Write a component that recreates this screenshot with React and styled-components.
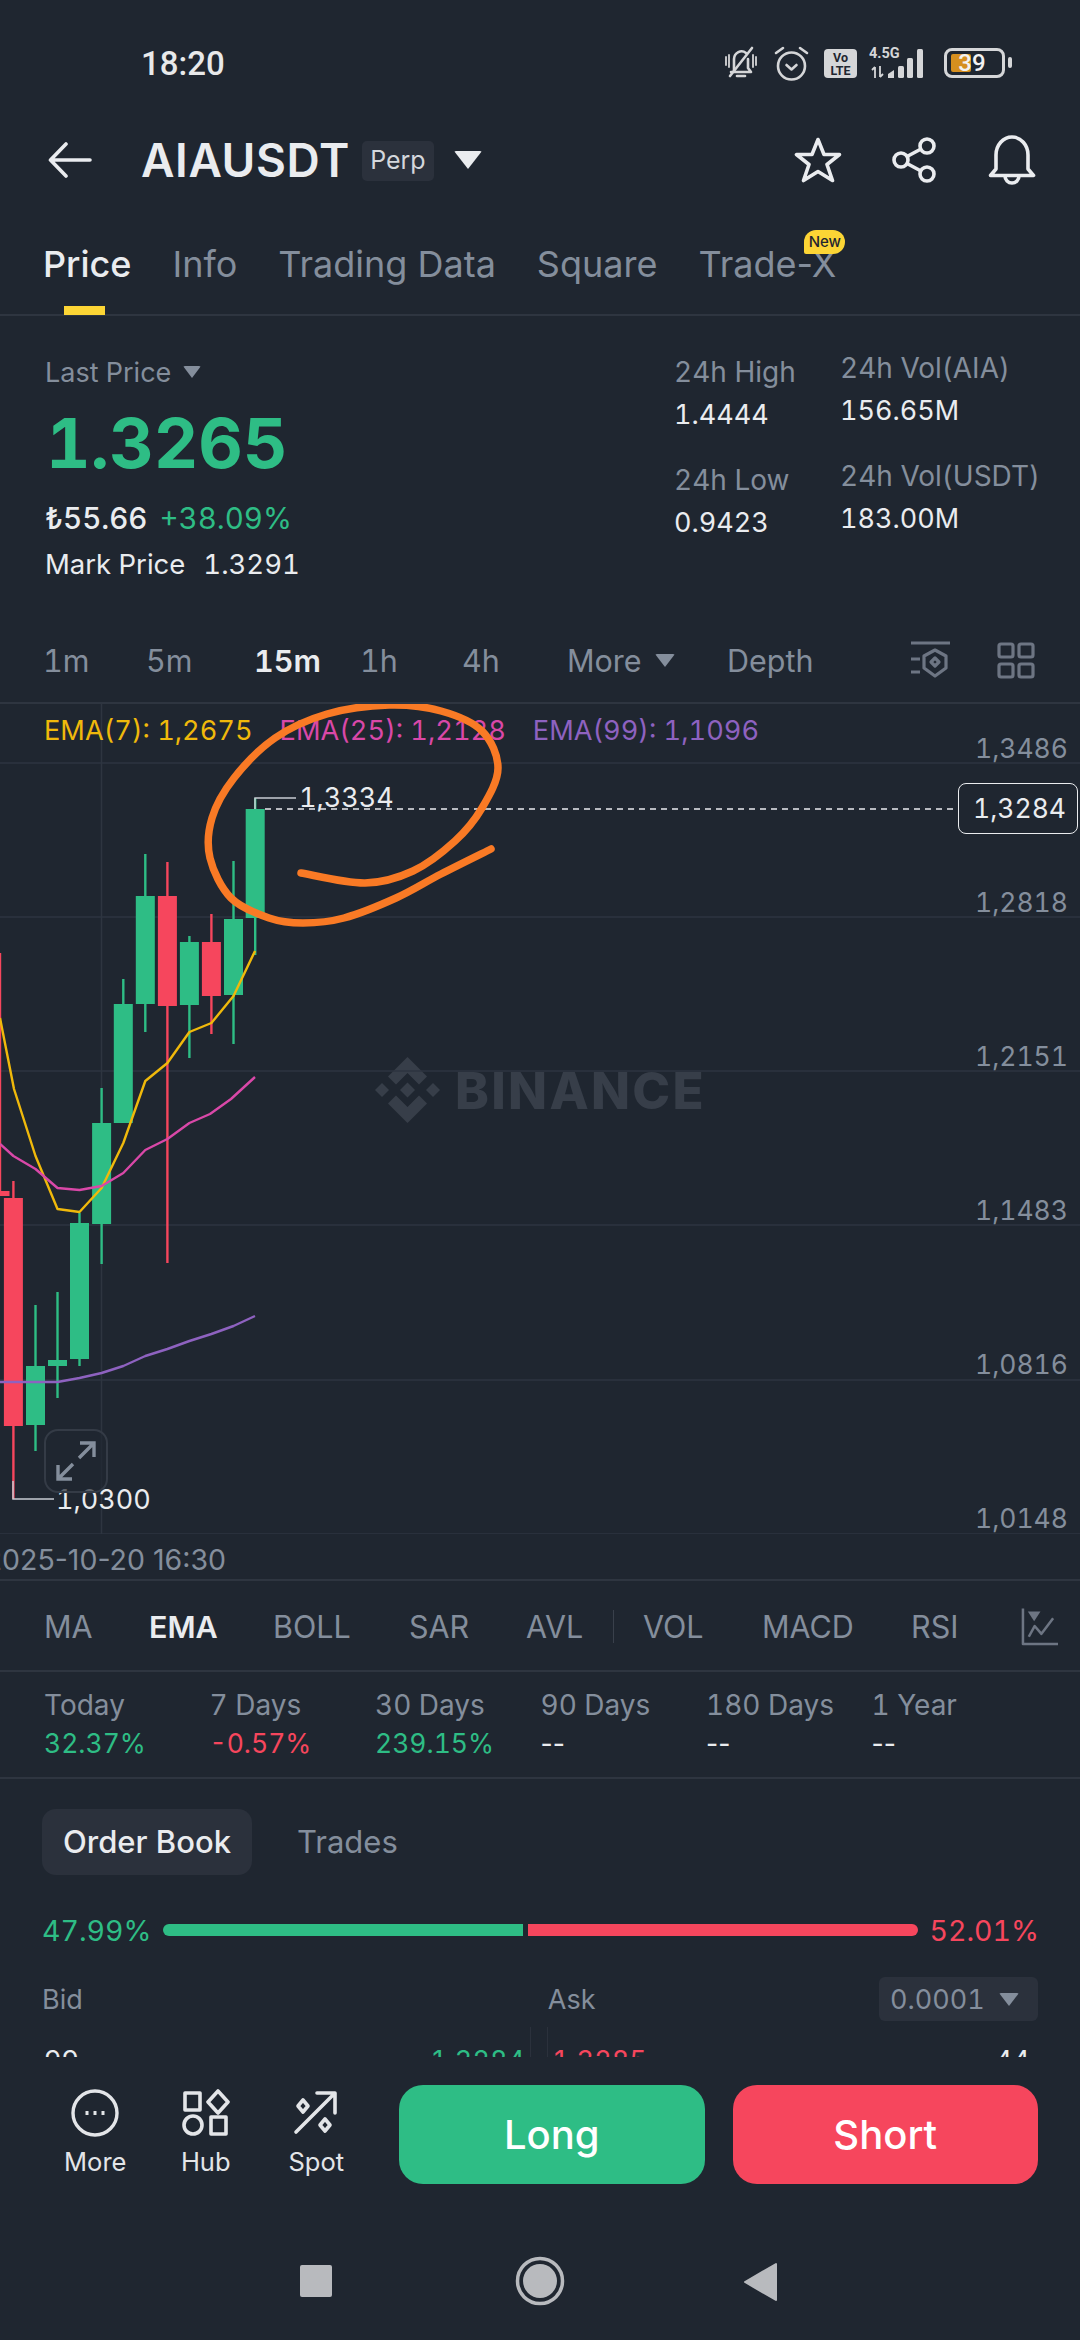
import React from 'react'
import styled, { createGlobalStyle } from 'styled-components'

const GlobalStyle = createGlobalStyle`
 html, body { margin: 0; padding: 0; background: #1f2630; }
 * { box-sizing: border-box; }
`

const green = '#2ebd85'
const red = '#f6465d'
const gray = '#848e9c'
const white = '#eaecef'
const line = '#2e3540'

const Page = styled.div`
 width: 1080px;
 height: 2340px;
 overflow: hidden;
 background: #1f2630;
 color: ${white};
 font-family: Inter, Lato, sans-serif;
 font-variant-numeric: tabular-nums;
 display: flex;
 flex-direction: column;
`

/* status bar */
const StatusBar = styled.div`
 height: 126px;
 flex: none;
 position: relative;
 display: flex;
 align-items: center;
 padding-left: 141px;
 font-family: Roboto, sans-serif;
 font-size: 33px;
 font-weight: 500;
 color: #e8e9ea;
`
const StatusIcons = styled.div`
 margin-left: auto;
 margin-right: 75px;
 display: flex;
 align-items: center;
 height: 40px;
`
const VoLte = styled.div`
 width: 33px;
 height: 29px;
 margin: 0 12px 0 14px;
 border-radius: 4px;
 background: #d5d6d8;
 color: #1f2630;
 font-size: 12.5px;
 font-weight: 700;
 line-height: 13px;
 text-align: center;
 padding-top: 2px;
`
const Network = styled.div`
 width: 60px;
 height: 32px;
 position: relative;
`
const NetText = styled.span`
 position: absolute;
 left: 0;
 top: 0;
 font-size: 14.5px;
 line-height: 14px;
 font-weight: 700;
 color: #d5d6d8;
`
const Battery = styled.div`
 width: 61px;
 height: 30px;
 margin-left: 15px;
 border: 3px solid #d5d6d8;
 border-radius: 8px;
 position: relative;
 display: flex;
 align-items: center;
 justify-content: center;
 padding-right: 5px;
 font-size: 24px;
 font-weight: 500;
 color: #f2f2f2;
 &::before {
  content: '';
  position: absolute;
  left: 4px;
  top: 3px;
  bottom: 3px;
  width: 20px;
  background: #d68f1f;
  border-radius: 2px;
  z-index: 0;
 }
 &::after {
  content: '';
  position: absolute;
  right: -10px;
  top: 6px;
  width: 4px;
  height: 11px;
  background: #d5d6d8;
  border-radius: 2px;
 }
`
const BatteryText = styled.span`
 position: relative;
 z-index: 1;
`
const IconGap = styled.span`
 width: ${p => p.$w}px;
 flex: none;
`

/* header */
const Header = styled.div`
 height: 68px;
 flex: none;
 display: flex;
 align-items: center;
 padding: 0 44px 0 48px;
`
const Title = styled.div`
 margin-left: 49px;
 font-size: 46px;
 font-weight: 600;
 letter-spacing: 0.6px;
 color: ${white};
`
const PerpBadge = styled.div`
 margin-left: 12px;
 width: 72px;
 height: 40px;
 margin-top: 2px;
 border-radius: 5px;
 background: #2b313c;
 font-size: 25px;
 line-height: 38px;
 text-align: center;
 color: #d4d7dc;
`
const Triangle = styled.span`
 display: inline-block;
 flex: none;
 width: 0;
 height: 0;
 border-left: ${p => p.$w / 2}px solid transparent;
 border-right: ${p => p.$w / 2}px solid transparent;
 border-top: ${p => p.$h}px solid ${p => p.$color || gray};
 border-radius: 2px;
`
const HeaderActions = styled.div`
 margin-left: auto;
 display: flex;
 align-items: center;
 gap: 50px;
`

/* tabs */
const Tabs = styled.div`
 height: 122px;
 flex: none;
 display: flex;
 gap: 41px;
 padding: 48px 0 0 43px;
 border-bottom: 2px solid ${line};
`
const Tab = styled.div`
 position: relative;
 height: 44px;
 line-height: 44px;
 font-size: 36px;
 font-variant-numeric: normal;
 font-weight: ${p => (p.$active ? 500 : 400)};
 color: ${p => (p.$active ? white : gray)};
`
const TabMark = styled.div`
 position: absolute;
 left: 21px;
 top: 64px;
 width: 41px;
 height: 9px;
 background: #fcd535;
`
const NewBadge = styled.div`
 position: absolute;
 right: -9px;
 top: -12px;
 width: 41px;
 height: 24px;
 border-radius: 12px 12px 12px 2px;
 background: #fcd535;
 color: #1f2630;
 font-size: 15px;
 line-height: 24px;
 font-weight: 500;
 text-align: center;
`

/* price summary */
const Summary = styled.div`
 height: 312px;
 flex: none;
 display: flex;
 padding-left: 45px;
`
const SummaryMain = styled.div`
 width: 629px;
 padding-top: 38px;
`
const LastLabel = styled.div`
 display: flex;
 align-items: center;
 gap: 12px;
 height: 36px;
 font-size: 27px;
 color: ${gray};
`
const BigPrice = styled.div`
 margin: 13px 0 0 1px;
 height: 80px;
 line-height: 80px;
 font-size: 69px;
 font-weight: 700;
 color: ${green};
`
const ChangeRow = styled.div`
 margin-top: 17px;
 height: 36px;
 line-height: 36px;
 font-size: 29.5px;
 display: flex;
 gap: 12px;
 font-weight: 500;
`
const Up = styled.span`
 color: ${green};
 font-weight: 400;
`
const MarkRow = styled.div`
 margin-top: 10px;
 height: 36px;
 line-height: 36px;
 font-size: 27.5px;
 display: flex;
 gap: 18px;
`
const StatCol = styled.div`
 width: ${p => p.$w}px;
 padding-top: ${p => p.$top}px;
 display: flex;
 flex-direction: column;
 gap: 29px;
`
const Stat = styled.div`
 display: flex;
 flex-direction: column;
 gap: 7px;
`
const StatLabel = styled.div`
 height: 36px;
 line-height: 36px;
 font-size: 28px;
 color: ${gray};
 white-space: nowrap;
`
const StatValue = styled.div`
 height: 36px;
 line-height: 36px;
 font-size: 27px;
`

/* interval row */
const Intervals = styled.div`
 height: 76px;
 flex: none;
 display: flex;
 align-items: center;
 padding: 0 45px 10px 43px;
 border-bottom: 2px solid ${line};
`
const Interval = styled.div`
 width: ${p => p.$w}px;
 flex: none;
 display: flex;
 align-items: center;
 gap: 13px;
 font-size: 30.5px;
 font-weight: ${p => (p.$active ? 600 : 400)};
 color: ${p => (p.$active ? white : gray)};
`
const IntervalIcons = styled.div`
 margin-left: auto;
 display: flex;
 align-items: center;
 gap: 46px;
`

/* chart */
const Chart = styled.div`
 position: relative;
 height: 830px;
 flex: none;
 overflow: hidden;
`
const ChartDrawing = styled.svg`
 position: absolute;
 left: 0;
 top: 0;
 width: 1080px;
 height: 830px;
`
const EmaRow = styled.div`
 position: relative;
 height: 52px;
 display: flex;
 align-items: center;
 gap: 27px;
 padding-left: 44px;
 font-size: 27.2px;
 white-space: nowrap;
`
const Ema = styled.span`
 color: ${p => p.$color};
`
const Watermark = styled.div`
 position: absolute;
 left: 375px;
 top: 353px;
 display: flex;
 align-items: center;
 gap: 15px;
 font-size: 51px;
 font-weight: 800;
 letter-spacing: 2.3px;
 color: #373e49;
`
const PriceAxis = styled.div`
 position: absolute;
 right: 12px;
 top: 27px;
 display: flex;
 flex-direction: column;
 gap: 120px;
 align-items: flex-end;
`
const Tick = styled.div`
 height: 34px;
 line-height: 34px;
 font-size: 26.5px;
 color: ${gray};
`
const PriceTag = styled.div`
 position: absolute;
 left: 958px;
 top: 79px;
 width: 120px;
 height: 51px;
 padding-left: 3px;
 border: 1.5px solid ${white};
 border-radius: 8px;
 background: #1f2630;
 font-size: 26.5px;
 line-height: 48px;
 text-align: center;
`
const Extreme = styled.div`
 position: absolute;
 left: ${p => p.$left}px;
 top: ${p => p.$top}px;
 height: 34px;
 line-height: 34px;
 font-size: 27px;
 color: ${white};
`
const ExpandButton = styled.div`
 position: absolute;
 left: 44px;
 top: 725px;
 width: 64px;
 height: 64px;
 border: 2px solid #343b46;
 border-radius: 14px;
 background: rgba(31, 38, 48, 0.7);
 display: flex;
 align-items: center;
 justify-content: center;
`
const DateRow = styled.div`
 height: 45px;
 flex: none;
 display: flex;
 align-items: center;
 justify-content: flex-end;
 width: 226px;
 padding-top: 5px;
 font-size: 28.5px;
 font-variant-numeric: normal;
 color: ${gray};
 white-space: nowrap;
`
const Rule = styled.div`
 height: 2px;
 flex: none;
 background: ${line};
`

/* indicators */
const Indicators = styled.div`
 height: 91px;
 flex: none;
 display: flex;
 align-items: center;
 padding: 2px 22px 0 44px;
 font-size: 30.5px;
 border-bottom: 2px solid ${line};
`
const Indicator = styled.div`
 width: ${p => p.$w}px;
 flex: none;
 font-weight: ${p => (p.$active ? 600 : 400)};
 color: ${p => (p.$active ? white : gray)};
`
const Divider = styled.div`
 width: 1px;
 height: 33px;
 background: #39404b;
 flex: none;
 margin: 0 29px 0 0;
`

/* period returns */
const Periods = styled.div`
 height: 107px;
 flex: none;
 display: grid;
 grid-template-columns: repeat(6, 165.5px);
 padding: 16px 0 0 44px;
 border-bottom: 2px solid ${line};
`
const Period = styled.div`
 display: flex;
 flex-direction: column;
 gap: 4px;
 line-height: 34px;
`
const PeriodLabel = styled.div`
 color: ${gray};
 font-size: 28px;
`
const PeriodValue = styled.div`
 font-size: 26.5px;
 font-variant-numeric: ${p => (p.$empty ? 'normal' : 'tabular-nums')};
 color: ${p => p.$color};
`

/* order book */
const BookTabs = styled.div`
 flex: none;
 display: flex;
 align-items: center;
 gap: 45px;
 margin: 30px 0 0 42px;
`
const BookTab = styled.div`
 height: 66px;
 line-height: 66px;
 font-size: 31px;
 font-weight: ${p => (p.$active ? 500 : 400)};
 color: ${p => (p.$active ? white : gray)};
 padding: 0 ${p => (p.$active ? 21 : 0)}px;
 border-radius: 14px;
 background: ${p => (p.$active ? '#2b313c' : 'transparent')};
`
const Ratio = styled.div`
 margin-top: 37px;
 height: 36px;
 flex: none;
 display: flex;
 align-items: center;
 padding: 0 41px 0 42px;
 font-size: 28.5px;
`
const RatioBar = styled.div`
 margin: 0 11px;
 flex: 1;
 height: 12px;
 display: flex;
 gap: 5px;
`
const RatioPart = styled.div`
 height: 12px;
 background: ${p => p.$color};
 border-radius: ${p => p.$radius};
`
const Down = styled.span`
 color: ${red};
`
const BookHead = styled.div`
 margin-top: 29px;
 height: 44px;
 flex: none;
 display: flex;
 align-items: center;
 padding: 0 42px;
 font-size: 27px;
 color: ${gray};
`
const AskHead = styled.div`
 margin-left: 465px;
`
const Precision = styled.div`
 margin-left: auto;
 width: 159px;
 height: 44px;
 display: flex;
 align-items: center;
 gap: 14px;
 padding-left: 11px;
 border-radius: 6px;
 background: #2b313c;
`
const BookClip = styled.div`
 margin-top: 6px;
 height: 30px;
 flex: none;
 overflow: hidden;
 display: grid;
 grid-template-columns: 481px 27px 1fr;
 padding: 17px 50px 0 44px;
 font-size: 27px;
 line-height: 34px;
 position: relative;
`
const BookSide = styled.div`
 display: flex;
 justify-content: space-between;
 color: ${p => p.$color};
`
const BookQty = styled.span`
 color: ${white};
`
const BookGap = styled.div`
 margin: -17px 4px 0 5px;
 border-left: 1px solid #2b313c;
 border-right: 1px solid #2b313c;
 height: 60px;
`

/* actions */
const ActionBar = styled.div`
 margin-top: 28px;
 height: 99px;
 flex: none;
 display: flex;
 align-items: stretch;
 padding: 0 42px 0 40px;
`
const NavItems = styled.div`
 width: 331px;
 flex: none;
 display: flex;
`
const NavItem = styled.div`
 width: 110.5px;
 flex: none;
 display: flex;
 flex-direction: column;
 align-items: center;
 font-size: 25.5px;
 line-height: 32px;
 color: #e3e5e8;
 gap: 9px;
 padding-top: 4px;
`
const TradeButton = styled.div`
 width: 306px;
 margin-left: ${p => p.$gap}px;
 border-radius: 24px;
 background: ${p => p.$color};
 color: #fff;
 font-size: 40px;
 font-weight: 500;
 display: flex;
 align-items: center;
 justify-content: center;
`

/* android nav */
const SystemNav = styled.div`
 flex: 1;
 position: relative;
 display: flex;
 align-items: center;
 justify-content: center;
 padding-top: 37px;
`

const candles = [
 { x: 0, top: 952, low: 1195, o: 1190, c: 1195, col: red },
 { x: 13.4, top: 1180, low: 1498, o: 1197, c: 1425, col: red },
 { x: 35.5, top: 1304, low: 1450, o: 1365, c: 1424, col: green },
 { x: 57.5, top: 1291, low: 1397, o: 1359, c: 1365, col: green },
 { x: 79.5, top: 1212, low: 1365, o: 1222, c: 1358, col: green },
 { x: 101.6, top: 1087, low: 1263, o: 1122, c: 1223, col: green },
 { x: 123.3, top: 978, low: 1122, o: 1003, c: 1122, col: green },
 { x: 145.3, top: 853, low: 1031, o: 895, c: 1003, col: green },
 { x: 167.4, top: 861, low: 1262, o: 895, c: 1005, col: red },
 { x: 189.4, top: 935, low: 1057, o: 941, c: 1004, col: green },
 { x: 211.4, top: 913, low: 1033, o: 941, c: 995, col: red },
 { x: 233.5, top: 860, low: 1043, o: 918, c: 994, col: green },
 { x: 255.2, top: 797, low: 954, o: 808, c: 917, col: green },
]

const ema7 = '0,1017 14,1088 35.5,1155 57.5,1208 79.5,1211 101.6,1187 123.3,1142 145.3,1080 167.4,1062 189.4,1031 211.4,1022 233.5,995 255,950'
const ema25 = '0,1143 13.4,1155 35.5,1168 57.5,1187 79.5,1189 101.6,1185 123.3,1172 145.3,1149 167.4,1138 189.4,1122 210,1113 231,1098 255,1076'
const ema99 = '0,1381 35.5,1381 57.5,1381 79.5,1377 101.6,1372 123.3,1365 145.3,1355 167.4,1348 189.4,1340 211.4,1333 233.5,1325 255,1315'

const orangePts = [
 [301, 872], [365, 882], [413, 870], [455, 840], [482, 807], [498, 767], [482, 730], [441, 710],
 [389, 704], [327, 713], [275, 737], [234, 777], [212, 817], [210, 857], [231, 897], [269, 917],
 [303, 922], [344, 917], [396, 897], [441, 873], [491, 848],
]

// catmull-rom through the hand drawn points
const smooth = pts => {
 let d = `M${pts[0][0]} ${pts[0][1]}`
 for (let i = 0; i < pts.length - 1; i++) {
  const p0 = pts[i - 1] || pts[i]
  const p1 = pts[i]
  const p2 = pts[i + 1]
  const p3 = pts[i + 2] || p2
  d += ` C${p1[0] + (p2[0] - p0[0]) / 6} ${p1[1] + (p2[1] - p0[1]) / 6} ${p2[0] - (p3[0] - p1[0]) / 6} ${p2[1] - (p3[1] - p1[1]) / 6} ${p2[0]} ${p2[1]}`
 }
 return d
}

const BellOff = () => (
 <svg width="36" height="34" viewBox="0 0 36 34" fill="none" stroke="#d5d6d8" strokeWidth="2.6" strokeLinecap="round" strokeLinejoin="round">
  <path d="M11 25 V13 a7.5 8 0 0 1 12 -6 M25 13 V22 l3 4 H8" />
  <path d="M14 30 h8" />
  <path d="M29 2 L7 30" />
  <path d="M3 11 v8 M6 9 v12 M33 11 v8 M30 9 v12" strokeWidth="1.8" />
 </svg>
)
const Alarm = () => (
 <svg width="37" height="37" viewBox="0 0 37 37" fill="none" stroke="#d5d6d8" strokeWidth="2.6" strokeLinecap="round" strokeLinejoin="round">
  <circle cx="18.5" cy="21" r="13.5" />
  <path d="M13.5 20 l5 4.5 l5 -4.5" />
  <path d="M3 8 L10 3 M34 8 L27 3" />
 </svg>
)
const Signal = () => (
 <svg width="60" height="32" viewBox="0 0 60 32" fill="#d5d6d8">
  <path d="M6 31 V20 M3 23 L6 20 M11 19 V30 M11 30 L14 27" stroke="#d5d6d8" strokeWidth="1.8" fill="none" />
  <path d="M19 31 v-4 l6 -4 v8 z" />
  <rect x="29" y="19" width="6" height="12" rx="1.5" />
  <rect x="38" y="11" width="6" height="20" rx="1.5" />
  <rect x="48" y="2" width="6" height="29" rx="1.5" />
 </svg>
)
const BackArrow = () => (
 <svg width="44" height="36" viewBox="0 0 44 36" fill="none" stroke={white} strokeWidth="3.6" strokeLinecap="round" strokeLinejoin="round">
  <path d="M42 18 H3 M18 2 L2.5 18 L18 34" />
 </svg>
)
const Star = () => (
 <svg width="48" height="46" viewBox="0 0 48 46" fill="none" stroke={white} strokeWidth="3.6" strokeLinejoin="round">
  <path d="M24 2.5 L30 17.5 H45.5 L33 27.5 L38.5 43.5 L24 34.5 L9.5 43.5 L15 27.5 L2.5 17.5 H18 Z" />
 </svg>
)
const Share = () => (
 <svg width="46" height="46" viewBox="0 0 46 46" fill="none" stroke={white} strokeWidth="3.6">
  <circle cx="35" cy="9" r="7" />
  <circle cx="35" cy="37" r="7" />
  <circle cx="9" cy="23" r="7" />
  <path d="M15 19.5 L29 12 M15 26.5 L29 34" />
 </svg>
)
const Bell = () => (
 <svg width="48" height="50" viewBox="0 0 48 50" fill="none" stroke={white} strokeWidth="3.6" strokeLinejoin="round">
  <path d="M8 34 V20 a16 18 0 0 1 32 0 V34 l5.5 6.5 H2.5 Z" />
  <path d="M17 41 a7 7 0 0 0 14 0" />
 </svg>
)
const ChartSettings = () => (
 <svg width="42" height="38" viewBox="0 0 42 38" fill="none" stroke="#6d7583" strokeWidth="3.2" strokeLinejoin="round">
  <path d="M2 2 H41 M2 18 H11 M2 31 H11" />
  <path d="M26 9 L37 15 V27 L26 35 L15 27 V15 Z" />
  <path d="M26 17 L30 21 L26 25 L22 21 Z" />
 </svg>
)
const LayoutGrid = () => (
 <svg width="38" height="37" viewBox="0 0 38 37" fill="none" stroke="#6d7583" strokeWidth="3.2">
  <rect x="2" y="2" width="14" height="13" rx="2" />
  <rect x="22" y="2" width="14" height="13" rx="2" />
  <rect x="2" y="22" width="14" height="13" rx="2" />
  <rect x="22" y="22" width="14" height="13" rx="2" />
 </svg>
)
const IndicatorIcon = () => (
 <svg width="38" height="38" viewBox="0 0 38 38" fill="none" stroke="#6d7583" strokeWidth="2.6" strokeLinejoin="round">
  <path d="M2 0 V36.5 H38" />
  <path d="M8 29 L14 18 L21 26 L33 10" />
  <path d="M7 3 H20 L13.5 13 Z" fill="#6d7583" stroke="none" />
 </svg>
)
const MoreIcon = () => (
 <svg width="48" height="48" viewBox="0 0 48 48" fill="none" stroke="#e3e5e8" strokeWidth="3.4">
  <circle cx="24" cy="24" r="22" />
  <path d="M14.5 24 h3 M22.5 24 h3 M30.5 24 h3" strokeWidth="4" />
 </svg>
)
const HubIcon = () => (
 <svg width="48" height="48" viewBox="0 0 48 48" fill="none" stroke="#e3e5e8" strokeWidth="3.6" strokeLinejoin="round">
  <rect x="3" y="4" width="15" height="17" />
  <path d="M36 2 L46 13 L36 24 L26 13 Z" />
  <circle cx="11" cy="36" r="9" />
  <rect x="29" y="28" width="15" height="17" />
 </svg>
)
const SpotIcon = () => (
 <svg width="46" height="48" viewBox="0 0 46 48" fill="none" stroke="#e3e5e8" strokeWidth="3.6" strokeLinejoin="round" strokeLinecap="round">
  <path d="M3 43 L41 5 M24 4 H42 V24" />
  <path d="M10 11 L15 17 L10 23 L5 17 Z" />
  <path d="M32 30 L37 36 L32 42 L27 36 Z" />
 </svg>
)
const ExpandIcon = () => (
 <svg width="40" height="40" viewBox="0 0 40 40" fill="none" stroke="#848e9c" strokeWidth="3.4">
  <path d="M38 2 L23 17 M24 2 H38 V16" />
  <path d="M2 38 L17 23 M2 24 V38 H16" />
 </svg>
)
const BinanceMark = () => (
 <svg width="65" height="66" viewBox="0 0 65 66" fill="#373e49">
  <path d="M32.5 0 L52 19.5 L44 27.5 L32.5 16 L21 27.5 L13 19.5 Z" />
  <path d="M32.5 66 L52 46.5 L44 38.5 L32.5 50 L21 38.5 L13 46.5 Z" />
  <path d="M32.5 25.5 L40 33 L32.5 40.5 L25 33 Z" />
  <path d="M7 26 L14 33 L7 40 L0 33 Z" />
  <path d="M58 26 L65 33 L58 40 L51 33 Z" />
 </svg>
)
const SystemButtons = () => (
 <svg width="1080" height="60" viewBox="0 2245 1080 60" fill="#b8babe">
  <rect x="300" y="2259" width="32" height="32" rx="2" />
  <circle cx="540" cy="2275" r="22.5" fill="none" stroke="#b8babe" strokeWidth="3.5" />
  <circle cx="540" cy="2275" r="17" />
  <path d="M776 2258 V2294 L745 2276 Z" strokeLinejoin="round" stroke="#b8babe" strokeWidth="2" />
 </svg>
)

const tabs = ['Price', 'Info', 'Trading Data', 'Square', 'Trade-X']
const intervals = [['1m', 103], ['5m', 108], ['15m', 106], ['1h', 102], ['4h', 105]]
const indicators = [['MA', 105], ['EMA', 124, true], ['BOLL', 136], ['SAR', 117], ['AVL', 87]]
const indicatorsRight = [['VOL', 119], ['MACD', 149], ['RSI', 110]]
const periods = [
 ['Today', '32.37%', green],
 ['7 Days', '-0.57%', red],
 ['30 Days', '239.15%', green],
 ['90 Days', '--', white],
 ['180 Days', '--', white],
 ['1 Year', '--', white],
]
const ticks = ['1,3486', '1,2818', '1,2151', '1,1483', '1,0816', '1,0148']
const gridY = [762, 916, 1070, 1224, 1379, 1533]

export default function App() {
 return (
  <Page>
   <GlobalStyle />
   <StatusBar>
    18:20
    <StatusIcons>
     <BellOff />
     <IconGap $w={14} />
     <Alarm />
     <VoLte>Vo<br />LTE</VoLte>
     <Network>
      <NetText>4.5G</NetText>
      <Signal />
     </Network>
     <Battery><BatteryText>39</BatteryText></Battery>
    </StatusIcons>
   </StatusBar>

   <Header>
    <BackArrow />
    <Title>AIAUSDT</Title>
    <PerpBadge>Perp</PerpBadge>
    <IconGap $w={20} />
    <Triangle $w={28} $h={18} $color={white} />
    <HeaderActions>
     <Star />
     <Share />
     <Bell />
    </HeaderActions>
   </Header>

   <Tabs>
    {tabs.map((t, i) => (
     <Tab key={t} $active={i === 0}>
      {t}
      {i === 0 && <TabMark />}
      {t === 'Trade-X' && <NewBadge>New</NewBadge>}
     </Tab>
    ))}
   </Tabs>

   <Summary>
    <SummaryMain>
     <LastLabel>Last Price <Triangle $w={18} $h={12} /></LastLabel>
     <BigPrice>1.3265</BigPrice>
     <ChangeRow>₺55.66 <Up>+38.09%</Up></ChangeRow>
     <MarkRow><span>Mark Price</span><span>1.3291</span></MarkRow>
    </SummaryMain>
    <StatCol $w={166} $top={38}>
     <Stat><StatLabel>24h High</StatLabel><StatValue>1.4444</StatValue></Stat>
     <Stat><StatLabel>24h Low</StatLabel><StatValue>0.9423</StatValue></Stat>
    </StatCol>
    <StatCol $w={200} $top={34}>
     <Stat><StatLabel>24h Vol(AIA)</StatLabel><StatValue>156.65M</StatValue></Stat>
     <Stat><StatLabel>24h Vol(USDT)</StatLabel><StatValue>183.00M</StatValue></Stat>
    </StatCol>
   </Summary>

   <Intervals>
    {intervals.map(([t, w]) => <Interval key={t} $w={w} $active={t === '15m'}>{t}</Interval>)}
    <Interval $w={160}>More <Triangle $w={20} $h={13} /></Interval>
    <Interval $w={90}>Depth</Interval>
    <IntervalIcons>
     <ChartSettings />
     <LayoutGrid />
    </IntervalIcons>
   </Intervals>

   <Chart>
    <Watermark><BinanceMark />BINANCE</Watermark>
    <ChartDrawing viewBox="0 703 1080 830" fill="none">
     {gridY.map(y => <path key={y} d={`M0 ${y} H1080`} stroke={line} strokeWidth="1.5" />)}
     <path d="M101.5 703 V1533" stroke={line} strokeWidth="1.5" />
     {candles.map(k => (
      <g key={k.x}>
       <path d={`M${k.x} ${k.top} V${k.low}`} stroke={k.col} strokeWidth="2.4" />
       <rect x={k.x - 9.5} y={k.o} width="19" height={k.c - k.o} fill={k.col} />
      </g>
     ))}
     <polyline points={ema7} stroke="#f0b90b" strokeWidth="2.4" strokeLinejoin="round" />
     <polyline points={ema25} stroke="#d948a8" strokeWidth="2.4" strokeLinejoin="round" />
     <polyline points={ema99} stroke="#8e62c0" strokeWidth="2.4" strokeLinejoin="round" />
     <path d="M265 808 H958" stroke={white} strokeWidth="1.5" strokeDasharray="6 5" />
     <path d="M255 808 V797 H296" stroke="#c8ccd2" strokeWidth="1.5" />
     <path d="M13 1480 V1498 H54" stroke="#c8ccd2" strokeWidth="1.5" />
    </ChartDrawing>
    <EmaRow>
     <Ema $color="#f0b90b">EMA(7): 1,2675</Ema>
     <Ema $color="#d948a8">EMA(25): 1,2128</Ema>
     <Ema $color="#8e62c0">EMA(99): 1,1096</Ema>
    </EmaRow>
    <PriceAxis>
     {ticks.map(t => <Tick key={t}>{t}</Tick>)}
    </PriceAxis>
    <PriceTag>1,3284</PriceTag>
    <Extreme $left={299} $top={77}>1,3334</Extreme>
    <Extreme $left={56} $top={779}>1,0300</Extreme>
    <ExpandButton><ExpandIcon /></ExpandButton>
    <ChartDrawing viewBox="0 703 1080 830" fill="none">
     <path d={smooth(orangePts)} stroke="#f97a25" strokeWidth="7.5" strokeLinecap="round" />
    </ChartDrawing>
   </Chart>

   <DateRow>2025-10-20 16:30</DateRow>
   <Rule />

   <Indicators>
    {indicators.map(([t, w, a]) => <Indicator key={t} $w={w} $active={a}>{t}</Indicator>)}
    <Divider />
    {indicatorsRight.map(([t, w]) => <Indicator key={t} $w={w}>{t}</Indicator>)}
    <IndicatorIcon />
   </Indicators>

   <Periods>
    {periods.map(([l, v, c]) => (
     <Period key={l}>
      <PeriodLabel>{l}</PeriodLabel>
      <PeriodValue $color={c} $empty={v === '--'}>{v}</PeriodValue>
     </Period>
    ))}
   </Periods>

   <BookTabs>
    <BookTab $active>Order Book</BookTab>
    <BookTab>Trades</BookTab>
   </BookTabs>

   <Ratio>
    <Up>47.99%</Up>
    <RatioBar>
     <RatioPart $color={green} $radius="6px 0 0 6px" style={{ width: '47.99%' }} />
     <RatioPart $color={red} $radius="0 6px 6px 0" style={{ width: '52.01%' }} />
    </RatioBar>
    <Down>52.01%</Down>
   </Ratio>

   <BookHead>
    Bid
    <AskHead>Ask</AskHead>
    <Precision>0.0001 <Triangle $w={20} $h={13} /></Precision>
   </BookHead>

   <BookClip>
    <BookSide $color={green}><BookQty>99</BookQty><span>1.3284</span></BookSide>
    <BookGap />
    <BookSide $color={red}><span>1.3285</span><BookQty>44</BookQty></BookSide>
   </BookClip>

   <ActionBar>
    <NavItems>
     <NavItem><MoreIcon />More</NavItem>
     <NavItem><HubIcon />Hub</NavItem>
     <NavItem><SpotIcon />Spot</NavItem>
    </NavItems>
    <TradeButton $gap={28} $color={green}>Long</TradeButton>
    <TradeButton $gap={28} $color={red}>Short</TradeButton>
   </ActionBar>

   <SystemNav>
    <SystemButtons />
   </SystemNav>
  </Page>
 )
}
